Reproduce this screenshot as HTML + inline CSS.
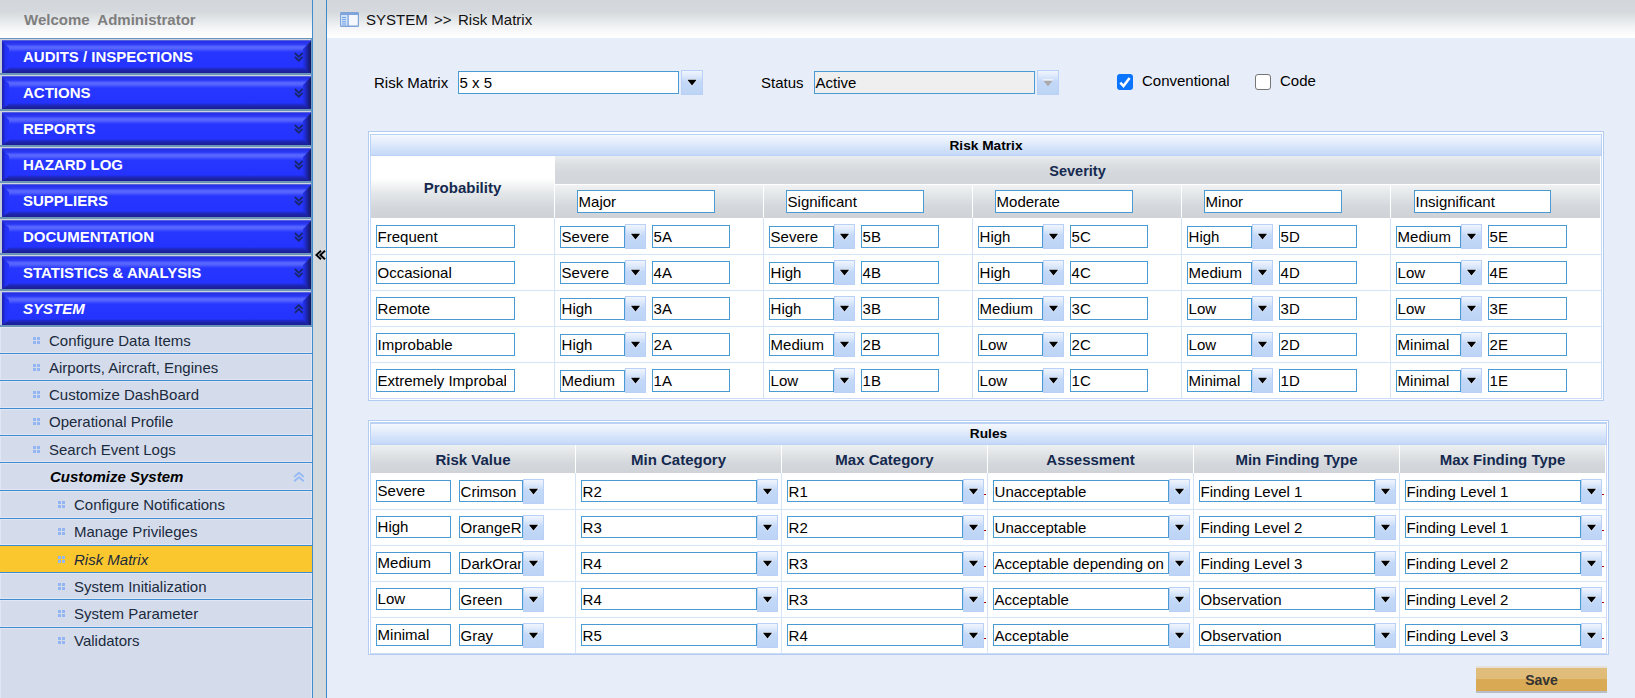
<!DOCTYPE html><html><head><meta charset="utf-8"><title>Risk Matrix</title><style>
*{box-sizing:border-box;margin:0;padding:0}
html,body{width:1635px;height:698px;overflow:hidden}
body{position:relative;background:#e8eef9;font-family:"Liberation Sans",sans-serif;font-size:15px;color:#000}
.abs{position:absolute}
#side{position:absolute;left:0;top:0;width:312px;height:698px;background:#d4dcec}
#sidehead{position:absolute;left:0;top:0;width:312px;height:38px;background:linear-gradient(to bottom,#d3d7db 0,#d5d9dd 30%,#e6e9eb 55%,#f5f6f7 76%,#fcfcfd 90%,#fefefe 100%)}
#sidehead span{position:absolute;left:24px;top:11px;font-weight:bold;color:#7e7e7e;white-space:pre;line-height:18px}
#sideborder{position:absolute;left:312px;top:0;width:1px;height:698px;background:#408dcd}
#split{position:absolute;left:313px;top:0;width:13px;height:698px;background:#d4d9dd}
#splitline{position:absolute;left:326px;top:0;width:1px;height:698px;background:#3b89c9}
#menubg{position:absolute;left:0;top:38px;width:312px;height:289px;background:#c3cbdc}
.mline{position:absolute;left:0;width:312px;height:2px;background:#6a94b8}
.mlight{position:absolute;left:0;width:312px;height:2px;background:#cdd3e1}
.mbtn{position:absolute;left:2px;width:309px;height:33px;
 background:linear-gradient(to bottom,#8189e2 0,#2631e0 1px,#2834ee 3px,#3442fa 5px,#5261ff 6px,#5967ff 8px,#4250ff 10px,#2737ff 12px,#2433ff 27px,#212cd8 28px,#1d25b0 30px,#1a1f92 33px);
 color:#fff;font-weight:bold;line-height:33px;padding-left:21px;white-space:pre}
.mbtn:before{content:"";position:absolute;left:0;top:1px;width:7px;height:32px;clip-path:polygon(0 0,100% 7px,100% 27px,0 100%);background:linear-gradient(to right,#1a21b0 0,#1e28cc 2px,#2331f4 3.5px,#2534ff 100%)}
.mbtn:after{content:"";position:absolute;right:0;top:1px;width:8px;height:32px;clip-path:polygon(100% 0,100% 100%,0 27px,0 8px);background:linear-gradient(to right,#2330f0 0,#1f29cc 30%,#181f86 70%,#131762 100%)}
.mbtn svg{position:absolute;left:291.6px;top:12px}
.item{position:absolute;left:0;width:312px;border-bottom:1px solid #3e8dd0;box-shadow:inset 0 0 0 1px rgba(255,255,255,.3);color:#1b2a3c;white-space:pre}
.item span{position:absolute;line-height:18px}
.dots{position:absolute;width:7px;height:7px}
.dots i{position:absolute;width:3px;height:3px;background:#93b6f3}
#chead{position:absolute;left:327px;top:0;width:1308px;height:38px;background:linear-gradient(to bottom,#d3d7db 0,#d5d9dd 30%,#e6e9eb 55%,#f5f6f7 76%,#fcfcfd 90%,#fefefe 100%)}
.lbl{position:absolute;line-height:18px;white-space:pre}
.inp{position:absolute;height:23px;border:1px solid #4a9ad4;background:#fff;line-height:21px;padding-left:0.6px;white-space:pre;overflow:hidden}
.inp:after{content:"";position:absolute;right:0;top:0;bottom:0;width:1px;background:inherit}
.inp.c8:after{width:8.5px}
.dd{position:absolute;width:22px;height:25px;background:linear-gradient(to bottom,#f0f5fe 0,#dde9fb 22%,#c4d9f8 45%,#bdd4f6 100%);border:1px solid #b9d1f6}
.dd:after{content:"";position:absolute;left:50%;margin-left:-6px;top:7px;width:12px;height:10px;background:#000;clip-path:polygon(1.4px 1.8px,10.6px 1.8px,6px 7.5px)}
.dd:before{content:"";position:absolute;left:50%;margin-left:-6px;top:7px;width:12px;height:10px;background:rgba(255,255,255,.6);clip-path:polygon(0.2px 1.1px,11.8px 1.1px,6px 8.5px)}
.dd.dis:after{background:#a9a9a9;top:8px}
.box{position:absolute;border:1px solid #b4ccf2;background:#fff}
.tbar{position:absolute;border:1px solid #bcd2f5;background:linear-gradient(to bottom,#f4f8fe 0,#e7effc 30%,#d6e4fa 62%,#c5d9f8 100%);text-align:center;font-weight:bold;font-size:13.7px;line-height:22px;color:#000}
.th{position:absolute;text-align:center;font-weight:bold;color:#15294f;white-space:pre}
.hsep{position:absolute;height:1px;background:#d6e4f7}
.vsep{position:absolute;width:1px;background:#d6e4f7}
</style></head><body>
<div id="side">
<div id="sidehead"><span>Welcome  Administrator</span></div>
<div id="menubg"></div>
<div class="mline" style="top:38px;height:1px"></div><div class="mlight" style="top:39px;height:1px"></div>
<div class="mbtn" style="top:40px">AUDITS / INSPECTIONS<svg width="10" height="10" viewBox="0 0 10 10"><path d="M0.9 1 L4.8 4.8 L8.7 1 M0.9 4.9 L4.8 8.7 L8.7 4.9" fill="none" stroke="#18266c" stroke-width="1.8"/></svg></div>
<div class="mline" style="top:73px"></div>
<div class="mlight" style="top:75px;height:1px"></div>
<div class="mbtn" style="top:76px">ACTIONS<svg width="10" height="10" viewBox="0 0 10 10"><path d="M0.9 1 L4.8 4.8 L8.7 1 M0.9 4.9 L4.8 8.7 L8.7 4.9" fill="none" stroke="#18266c" stroke-width="1.8"/></svg></div>
<div class="mline" style="top:109px"></div>
<div class="mlight" style="top:111px;height:1px"></div>
<div class="mbtn" style="top:112px">REPORTS<svg width="10" height="10" viewBox="0 0 10 10"><path d="M0.9 1 L4.8 4.8 L8.7 1 M0.9 4.9 L4.8 8.7 L8.7 4.9" fill="none" stroke="#18266c" stroke-width="1.8"/></svg></div>
<div class="mline" style="top:145px"></div>
<div class="mlight" style="top:147px;height:1px"></div>
<div class="mbtn" style="top:148px">HAZARD LOG<svg width="10" height="10" viewBox="0 0 10 10"><path d="M0.9 1 L4.8 4.8 L8.7 1 M0.9 4.9 L4.8 8.7 L8.7 4.9" fill="none" stroke="#18266c" stroke-width="1.8"/></svg></div>
<div class="mline" style="top:181px"></div>
<div class="mlight" style="top:183px;height:1px"></div>
<div class="mbtn" style="top:184px">SUPPLIERS<svg width="10" height="10" viewBox="0 0 10 10"><path d="M0.9 1 L4.8 4.8 L8.7 1 M0.9 4.9 L4.8 8.7 L8.7 4.9" fill="none" stroke="#18266c" stroke-width="1.8"/></svg></div>
<div class="mline" style="top:217px"></div>
<div class="mlight" style="top:219px;height:1px"></div>
<div class="mbtn" style="top:220px">DOCUMENTATION<svg width="10" height="10" viewBox="0 0 10 10"><path d="M0.9 1 L4.8 4.8 L8.7 1 M0.9 4.9 L4.8 8.7 L8.7 4.9" fill="none" stroke="#18266c" stroke-width="1.8"/></svg></div>
<div class="mline" style="top:253px"></div>
<div class="mlight" style="top:255px;height:1px"></div>
<div class="mbtn" style="top:256px">STATISTICS &amp; ANALYSIS<svg width="10" height="10" viewBox="0 0 10 10"><path d="M0.9 1 L4.8 4.8 L8.7 1 M0.9 4.9 L4.8 8.7 L8.7 4.9" fill="none" stroke="#18266c" stroke-width="1.8"/></svg></div>
<div class="mline" style="top:289px"></div>
<div class="mlight" style="top:291px;height:1px"></div>
<div class="mbtn" style="top:292px;font-style:italic">SYSTEM<svg width="10" height="10" viewBox="0 0 10 10"><path d="M0.9 4.9 L4.8 1.1 L8.7 4.9 M0.9 8.8 L4.8 5 L8.7 8.8" fill="none" stroke="#18266c" stroke-width="1.8"/></svg></div>
<div class="mline" style="top:325px"></div>
<div class="item" style="top:327px;height:27px"><div class="dots" style="left:33px;top:10px"><i style="left:0;top:0"></i><i style="left:4px;top:0"></i><i style="left:0;top:4px"></i><i style="left:4px;top:4px"></i></div><span style="left:49px;top:5px">Configure Data Items</span></div>
<div class="item" style="top:354px;height:27px"><div class="dots" style="left:33px;top:10px"><i style="left:0;top:0"></i><i style="left:4px;top:0"></i><i style="left:0;top:4px"></i><i style="left:4px;top:4px"></i></div><span style="left:49px;top:5px">Airports, Aircraft, Engines</span></div>
<div class="item" style="top:381px;height:28px"><div class="dots" style="left:33px;top:10px"><i style="left:0;top:0"></i><i style="left:4px;top:0"></i><i style="left:0;top:4px"></i><i style="left:4px;top:4px"></i></div><span style="left:49px;top:5px">Customize DashBoard</span></div>
<div class="item" style="top:409px;height:27px"><div class="dots" style="left:33px;top:9px"><i style="left:0;top:0"></i><i style="left:4px;top:0"></i><i style="left:0;top:4px"></i><i style="left:4px;top:4px"></i></div><span style="left:49px;top:4px">Operational Profile</span></div>
<div class="item" style="top:436px;height:27px"><div class="dots" style="left:33px;top:10px"><i style="left:0;top:0"></i><i style="left:4px;top:0"></i><i style="left:0;top:4px"></i><i style="left:4px;top:4px"></i></div><span style="left:49px;top:5px">Search Event Logs</span></div>
<div class="item" style="top:463px;height:28px"><span style="left:50px;top:5px;font-style:italic;font-weight:bold;color:#000">Customize System</span><svg class="abs" style="left:293px;top:8px" width="12" height="12" viewBox="0 0 12 12"><path d="M1.2 5.9 L6 1.7 L10.8 5.9 M1.2 10.3 L6 6.1 L10.8 10.3" fill="none" stroke="#94b9f5" stroke-width="1.8"/></svg></div>
<div class="item" style="top:491px;height:28px"><div class="dots" style="left:58px;top:10px"><i style="left:0;top:0"></i><i style="left:4px;top:0"></i><i style="left:0;top:4px"></i><i style="left:4px;top:4px"></i></div><span style="left:74px;top:5px">Configure Notifications</span></div>
<div class="item" style="top:519px;height:27px"><div class="dots" style="left:58px;top:9px"><i style="left:0;top:0"></i><i style="left:4px;top:0"></i><i style="left:0;top:4px"></i><i style="left:4px;top:4px"></i></div><span style="left:74px;top:4px">Manage Privileges</span></div>
<div class="item" style="top:546px;height:27px;background:#fbc72e;box-shadow:none"><div class="dots" style="left:58px;top:10px"><i style="left:0;top:0"></i><i style="left:4px;top:0"></i><i style="left:0;top:4px"></i><i style="left:4px;top:4px"></i></div><span style="left:74px;top:5px;font-style:italic">Risk Matrix</span></div>
<div class="item" style="top:573px;height:27px"><div class="dots" style="left:58px;top:10px"><i style="left:0;top:0"></i><i style="left:4px;top:0"></i><i style="left:0;top:4px"></i><i style="left:4px;top:4px"></i></div><span style="left:74px;top:5px">System Initialization</span></div>
<div class="item" style="top:600px;height:28px"><div class="dots" style="left:58px;top:10px"><i style="left:0;top:0"></i><i style="left:4px;top:0"></i><i style="left:0;top:4px"></i><i style="left:4px;top:4px"></i></div><span style="left:74px;top:5px">System Parameter</span></div>
<div class="item" style="top:628px;height:75px;border-bottom:none"><div class="dots" style="left:58px;top:9px"><i style="left:0;top:0"></i><i style="left:4px;top:0"></i><i style="left:0;top:4px"></i><i style="left:4px;top:4px"></i></div><span style="left:74px;top:4px">Validators</span></div>
</div>
<div class="abs" style="left:311px;top:38px;width:1px;height:289px;background:#6f99c2"></div><div id="sideborder"></div><div id="split"></div><div id="splitline"></div>
<svg class="abs" style="left:314.6px;top:250px" width="11" height="10" viewBox="0 0 11 10"><path d="M6 0.7 L1.3 5 L6 9.3 M10 0.7 L5.3 5 L10 9.3" fill="none" stroke="#000" stroke-width="1.9"/></svg>
<div id="chead"></div>
<svg class="abs" style="left:340px;top:12px" width="19" height="15" viewBox="0 0 19 15"><rect x="0" y="0" width="19" height="15" rx="1.2" fill="#7fa4dc"/><rect x="1" y="3" width="6.5" height="10.5" fill="#cfe0f7"/><rect x="8.8" y="3" width="9" height="10.5" fill="#f4f8fe"/><path d="M2 5.5h4M2 7.7h4M2 9.9h4M2 12h4" stroke="#5f9be8" stroke-width="0.9"/></svg>
<span class="lbl" style="left:366px;top:11px;color:#111">SYSTEM</span><span class="lbl" style="left:434px;top:11px;color:#111">&gt;&gt;</span><span class="lbl" style="left:458px;top:11px;color:#111">Risk Matrix</span>
<span class="lbl" style="left:374px;top:74px">Risk Matrix</span>
<div class="inp" style="left:458px;top:71px;width:221px">5 x 5</div><div class="dd" style="left:681px;top:70px"></div>
<span class="lbl" style="left:761px;top:74px">Status</span>
<div class="inp" style="left:814px;top:71px;width:221px;background:#efefef">Active</div><div class="dd dis" style="left:1037px;top:70px"></div>
<div class="abs" style="left:1117px;top:74px;width:16px;height:16px;border-radius:3px;background:#0b75ff"><svg width="16" height="16" viewBox="0 0 16 16"><path d="M3.3 8.7 L6.5 12 L12.6 3.9" fill="none" stroke="#fff" stroke-width="2.5"/></svg></div>
<span class="lbl" style="left:1142px;top:72px">Conventional</span>
<div class="abs" style="left:1255px;top:74px;width:16px;height:16px;border-radius:3px;background:#fff;border:1px solid #767676"></div>
<span class="lbl" style="left:1280px;top:72px">Code</span>
<div class="box" style="left:368px;top:131px;width:1236px;height:270px"></div>
<div class="box" style="left:370px;top:156px;width:1232px;height:243px;border-color:#c9dbf6;border-top:none"></div>
<div class="tbar" style="left:370px;top:134px;width:1232px;height:22px">Risk Matrix</div>
<div class="th" style="left:371px;top:156px;width:183px;height:62px;line-height:64px;background:linear-gradient(to bottom,#fff 0,#fff 36%,#e4e7e9 60%,#d2d6da 85%,#cfd3d7 100%)">Probability</div>
<div class="th" style="left:555px;top:156px;width:1045px;height:28px;line-height:30px;font-size:14.5px;background:linear-gradient(to bottom,#eaedef 0,#dcdfe2 30%,#d4d8dc 60%,#d3d7db 100%)">Severity</div>
<div class="th" style="left:555px;top:185px;width:208px;height:33px;background:linear-gradient(to bottom,#f0f2f3 0,#e3e6e8 30%,#d4d8dc 65%,#cfd3d7 100%)"></div>
<div class="inp" style="left:577px;top:190px;width:138px;height:23px;line-height:21px">Major</div>
<div class="th" style="left:764px;top:185px;width:208px;height:33px;background:linear-gradient(to bottom,#f0f2f3 0,#e3e6e8 30%,#d4d8dc 65%,#cfd3d7 100%)"></div>
<div class="inp" style="left:786px;top:190px;width:138px;height:23px;line-height:21px">Significant</div>
<div class="th" style="left:973px;top:185px;width:208px;height:33px;background:linear-gradient(to bottom,#f0f2f3 0,#e3e6e8 30%,#d4d8dc 65%,#cfd3d7 100%)"></div>
<div class="inp" style="left:995px;top:190px;width:138px;height:23px;line-height:21px">Moderate</div>
<div class="th" style="left:1182px;top:185px;width:208px;height:33px;background:linear-gradient(to bottom,#f0f2f3 0,#e3e6e8 30%,#d4d8dc 65%,#cfd3d7 100%)"></div>
<div class="inp" style="left:1204px;top:190px;width:138px;height:23px;line-height:21px">Minor</div>
<div class="th" style="left:1391px;top:185px;width:209px;height:33px;background:linear-gradient(to bottom,#f0f2f3 0,#e3e6e8 30%,#d4d8dc 65%,#cfd3d7 100%)"></div>
<div class="inp" style="left:1414px;top:190px;width:137px;height:23px;line-height:21px">Insignificant</div>
<div class="inp" style="left:376px;top:225px;width:139px;height:23px;line-height:21px">Frequent</div>
<div class="inp" style="left:560px;top:226px;width:65px;height:22px;line-height:20px">Severe</div><div class="dd" style="left:625px;top:224px;width:21px"></div>
<div class="inp" style="left:652px;top:225px;width:78px;height:23px;line-height:21px">5A</div>
<div class="inp" style="left:769px;top:226px;width:65px;height:22px;line-height:20px">Severe</div><div class="dd" style="left:834px;top:224px;width:21px"></div>
<div class="inp" style="left:861px;top:225px;width:78px;height:23px;line-height:21px">5B</div>
<div class="inp" style="left:978px;top:226px;width:65px;height:22px;line-height:20px">High</div><div class="dd" style="left:1043px;top:224px;width:21px"></div>
<div class="inp" style="left:1070px;top:225px;width:78px;height:23px;line-height:21px">5C</div>
<div class="inp" style="left:1187px;top:226px;width:65px;height:22px;line-height:20px">High</div><div class="dd" style="left:1252px;top:224px;width:21px"></div>
<div class="inp" style="left:1279px;top:225px;width:78px;height:23px;line-height:21px">5D</div>
<div class="inp" style="left:1396px;top:226px;width:65px;height:22px;line-height:20px">Medium</div><div class="dd" style="left:1461px;top:224px;width:21px"></div>
<div class="inp" style="left:1488px;top:225px;width:79px;height:23px;line-height:21px">5E</div>
<div class="hsep" style="left:371px;top:254px;width:1230px"></div>
<div class="inp" style="left:376px;top:261px;width:139px;height:23px;line-height:21px">Occasional</div>
<div class="inp" style="left:560px;top:262px;width:65px;height:22px;line-height:20px">Severe</div><div class="dd" style="left:625px;top:260px;width:21px"></div>
<div class="inp" style="left:652px;top:261px;width:78px;height:23px;line-height:21px">4A</div>
<div class="inp" style="left:769px;top:262px;width:65px;height:22px;line-height:20px">High</div><div class="dd" style="left:834px;top:260px;width:21px"></div>
<div class="inp" style="left:861px;top:261px;width:78px;height:23px;line-height:21px">4B</div>
<div class="inp" style="left:978px;top:262px;width:65px;height:22px;line-height:20px">High</div><div class="dd" style="left:1043px;top:260px;width:21px"></div>
<div class="inp" style="left:1070px;top:261px;width:78px;height:23px;line-height:21px">4C</div>
<div class="inp" style="left:1187px;top:262px;width:65px;height:22px;line-height:20px">Medium</div><div class="dd" style="left:1252px;top:260px;width:21px"></div>
<div class="inp" style="left:1279px;top:261px;width:78px;height:23px;line-height:21px">4D</div>
<div class="inp" style="left:1396px;top:262px;width:65px;height:22px;line-height:20px">Low</div><div class="dd" style="left:1461px;top:260px;width:21px"></div>
<div class="inp" style="left:1488px;top:261px;width:79px;height:23px;line-height:21px">4E</div>
<div class="hsep" style="left:371px;top:290px;width:1230px"></div>
<div class="inp" style="left:376px;top:297px;width:139px;height:23px;line-height:21px">Remote</div>
<div class="inp" style="left:560px;top:298px;width:65px;height:22px;line-height:20px">High</div><div class="dd" style="left:625px;top:296px;width:21px"></div>
<div class="inp" style="left:652px;top:297px;width:78px;height:23px;line-height:21px">3A</div>
<div class="inp" style="left:769px;top:298px;width:65px;height:22px;line-height:20px">High</div><div class="dd" style="left:834px;top:296px;width:21px"></div>
<div class="inp" style="left:861px;top:297px;width:78px;height:23px;line-height:21px">3B</div>
<div class="inp" style="left:978px;top:298px;width:65px;height:22px;line-height:20px">Medium</div><div class="dd" style="left:1043px;top:296px;width:21px"></div>
<div class="inp" style="left:1070px;top:297px;width:78px;height:23px;line-height:21px">3C</div>
<div class="inp" style="left:1187px;top:298px;width:65px;height:22px;line-height:20px">Low</div><div class="dd" style="left:1252px;top:296px;width:21px"></div>
<div class="inp" style="left:1279px;top:297px;width:78px;height:23px;line-height:21px">3D</div>
<div class="inp" style="left:1396px;top:298px;width:65px;height:22px;line-height:20px">Low</div><div class="dd" style="left:1461px;top:296px;width:21px"></div>
<div class="inp" style="left:1488px;top:297px;width:79px;height:23px;line-height:21px">3E</div>
<div class="hsep" style="left:371px;top:326px;width:1230px"></div>
<div class="inp" style="left:376px;top:333px;width:139px;height:23px;line-height:21px">Improbable</div>
<div class="inp" style="left:560px;top:334px;width:65px;height:22px;line-height:20px">High</div><div class="dd" style="left:625px;top:332px;width:21px"></div>
<div class="inp" style="left:652px;top:333px;width:78px;height:23px;line-height:21px">2A</div>
<div class="inp" style="left:769px;top:334px;width:65px;height:22px;line-height:20px">Medium</div><div class="dd" style="left:834px;top:332px;width:21px"></div>
<div class="inp" style="left:861px;top:333px;width:78px;height:23px;line-height:21px">2B</div>
<div class="inp" style="left:978px;top:334px;width:65px;height:22px;line-height:20px">Low</div><div class="dd" style="left:1043px;top:332px;width:21px"></div>
<div class="inp" style="left:1070px;top:333px;width:78px;height:23px;line-height:21px">2C</div>
<div class="inp" style="left:1187px;top:334px;width:65px;height:22px;line-height:20px">Low</div><div class="dd" style="left:1252px;top:332px;width:21px"></div>
<div class="inp" style="left:1279px;top:333px;width:78px;height:23px;line-height:21px">2D</div>
<div class="inp" style="left:1396px;top:334px;width:65px;height:22px;line-height:20px">Minimal</div><div class="dd" style="left:1461px;top:332px;width:21px"></div>
<div class="inp" style="left:1488px;top:333px;width:79px;height:23px;line-height:21px">2E</div>
<div class="hsep" style="left:371px;top:362px;width:1230px"></div>
<div class="inp c8" style="left:376px;top:369px;width:139px;height:23px;line-height:21px">Extremely Improbable</div>
<div class="inp" style="left:560px;top:370px;width:65px;height:22px;line-height:20px">Medium</div><div class="dd" style="left:625px;top:368px;width:21px"></div>
<div class="inp" style="left:652px;top:369px;width:78px;height:23px;line-height:21px">1A</div>
<div class="inp" style="left:769px;top:370px;width:65px;height:22px;line-height:20px">Low</div><div class="dd" style="left:834px;top:368px;width:21px"></div>
<div class="inp" style="left:861px;top:369px;width:78px;height:23px;line-height:21px">1B</div>
<div class="inp" style="left:978px;top:370px;width:65px;height:22px;line-height:20px">Low</div><div class="dd" style="left:1043px;top:368px;width:21px"></div>
<div class="inp" style="left:1070px;top:369px;width:78px;height:23px;line-height:21px">1C</div>
<div class="inp" style="left:1187px;top:370px;width:65px;height:22px;line-height:20px">Minimal</div><div class="dd" style="left:1252px;top:368px;width:21px"></div>
<div class="inp" style="left:1279px;top:369px;width:78px;height:23px;line-height:21px">1D</div>
<div class="inp" style="left:1396px;top:370px;width:65px;height:22px;line-height:20px">Minimal</div><div class="dd" style="left:1461px;top:368px;width:21px"></div>
<div class="inp" style="left:1488px;top:369px;width:79px;height:23px;line-height:21px">1E</div>
<div class="vsep" style="left:554px;top:218px;height:180px"></div>
<div class="vsep" style="left:763px;top:218px;height:180px"></div>
<div class="vsep" style="left:972px;top:218px;height:180px"></div>
<div class="vsep" style="left:1181px;top:218px;height:180px"></div>
<div class="vsep" style="left:1390px;top:218px;height:180px"></div>
<div class="box" style="left:368px;top:420px;width:1241px;height:235px"></div>
<div class="box" style="left:370px;top:445px;width:1237px;height:209px;border-color:#c9dbf6;border-top:none"></div>
<div class="tbar" style="left:370px;top:422px;width:1237px;height:23px;line-height:20px;border-top-width:2px">Rules</div>
<div class="th" style="left:371px;top:445px;width:204px;height:28px;line-height:30px;background:linear-gradient(to bottom,#eef0f2 0,#e2e5e7 30%,#d4d8dc 65%,#cfd3d7 100%)">Risk Value</div>
<div class="th" style="left:576px;top:445px;width:205px;height:28px;line-height:30px;background:linear-gradient(to bottom,#eef0f2 0,#e2e5e7 30%,#d4d8dc 65%,#cfd3d7 100%)">Min Category</div>
<div class="th" style="left:782px;top:445px;width:205px;height:28px;line-height:30px;background:linear-gradient(to bottom,#eef0f2 0,#e2e5e7 30%,#d4d8dc 65%,#cfd3d7 100%)">Max Category</div>
<div class="th" style="left:988px;top:445px;width:205px;height:28px;line-height:30px;background:linear-gradient(to bottom,#eef0f2 0,#e2e5e7 30%,#d4d8dc 65%,#cfd3d7 100%)">Assessment</div>
<div class="th" style="left:1194px;top:445px;width:205px;height:28px;line-height:30px;background:linear-gradient(to bottom,#eef0f2 0,#e2e5e7 30%,#d4d8dc 65%,#cfd3d7 100%)">Min Finding Type</div>
<div class="th" style="left:1400px;top:445px;width:205px;height:28px;line-height:30px;background:linear-gradient(to bottom,#eef0f2 0,#e2e5e7 30%,#d4d8dc 65%,#cfd3d7 100%)">Max Finding Type</div>
<div class="inp" style="left:376px;top:480px;width:75px;height:22px;line-height:20px">Severe</div>
<div class="inp" style="left:459px;top:480px;width:64px;height:22px;line-height:22px">Crimson</div><div class="dd" style="left:523px;top:479px;width:21px"></div>
<div class="inp" style="left:581px;top:480px;width:176px;height:22px;line-height:22px">R2</div><div class="dd" style="left:757px;top:479px;width:21px"></div>
<div class="inp" style="left:787px;top:480px;width:176px;height:22px;line-height:22px">R1</div><div class="dd" style="left:963px;top:479px;width:21px"></div>
<div class="inp" style="left:993px;top:480px;width:176px;height:22px;line-height:22px">Unacceptable</div><div class="dd" style="left:1169px;top:479px;width:21px"></div>
<div class="inp" style="left:1199px;top:480px;width:176px;height:22px;line-height:22px">Finding Level 1</div><div class="dd" style="left:1375px;top:479px;width:21px"></div>
<div class="inp" style="left:1405px;top:480px;width:176px;height:22px;line-height:22px">Finding Level 1</div><div class="dd" style="left:1581px;top:479px;width:21px"></div>
<span class="abs" style="left:1602.2px;top:493.6px;width:1.6px;height:1.4px;background:#a80000"></span><span class="abs" style="left:984.2px;top:493.6px;width:1.6px;height:1.4px;background:#a80000"></span>
<div class="hsep" style="left:371px;top:509px;width:1235px"></div>
<div class="inp" style="left:376px;top:516px;width:75px;height:22px;line-height:20px">High</div>
<div class="inp" style="left:459px;top:516px;width:64px;height:22px;line-height:22px">OrangeRed</div><div class="dd" style="left:523px;top:515px;width:21px"></div>
<div class="inp" style="left:581px;top:516px;width:176px;height:22px;line-height:22px">R3</div><div class="dd" style="left:757px;top:515px;width:21px"></div>
<div class="inp" style="left:787px;top:516px;width:176px;height:22px;line-height:22px">R2</div><div class="dd" style="left:963px;top:515px;width:21px"></div>
<div class="inp" style="left:993px;top:516px;width:176px;height:22px;line-height:22px">Unacceptable</div><div class="dd" style="left:1169px;top:515px;width:21px"></div>
<div class="inp" style="left:1199px;top:516px;width:176px;height:22px;line-height:22px">Finding Level 2</div><div class="dd" style="left:1375px;top:515px;width:21px"></div>
<div class="inp" style="left:1405px;top:516px;width:176px;height:22px;line-height:22px">Finding Level 1</div><div class="dd" style="left:1581px;top:515px;width:21px"></div>
<span class="abs" style="left:1602.2px;top:529.6px;width:1.6px;height:1.4px;background:#a80000"></span><span class="abs" style="left:984.2px;top:529.6px;width:1.6px;height:1.4px;background:#a80000"></span>
<div class="hsep" style="left:371px;top:545px;width:1235px"></div>
<div class="inp" style="left:376px;top:552px;width:75px;height:22px;line-height:20px">Medium</div>
<div class="inp" style="left:459px;top:552px;width:64px;height:22px;line-height:22px">DarkOrange</div><div class="dd" style="left:523px;top:551px;width:21px"></div>
<div class="inp" style="left:581px;top:552px;width:176px;height:22px;line-height:22px">R4</div><div class="dd" style="left:757px;top:551px;width:21px"></div>
<div class="inp" style="left:787px;top:552px;width:176px;height:22px;line-height:22px">R3</div><div class="dd" style="left:963px;top:551px;width:21px"></div>
<div class="inp" style="left:993px;top:552px;width:176px;height:22px;line-height:22px">Acceptable depending on risk</div><div class="dd" style="left:1169px;top:551px;width:21px"></div>
<div class="inp" style="left:1199px;top:552px;width:176px;height:22px;line-height:22px">Finding Level 3</div><div class="dd" style="left:1375px;top:551px;width:21px"></div>
<div class="inp" style="left:1405px;top:552px;width:176px;height:22px;line-height:22px">Finding Level 2</div><div class="dd" style="left:1581px;top:551px;width:21px"></div>
<span class="abs" style="left:1602.2px;top:565.6px;width:1.6px;height:1.4px;background:#a80000"></span><span class="abs" style="left:984.2px;top:565.6px;width:1.6px;height:1.4px;background:#a80000"></span>
<div class="hsep" style="left:371px;top:581px;width:1235px"></div>
<div class="inp" style="left:376px;top:588px;width:75px;height:22px;line-height:20px">Low</div>
<div class="inp" style="left:459px;top:588px;width:64px;height:22px;line-height:22px">Green</div><div class="dd" style="left:523px;top:587px;width:21px"></div>
<div class="inp" style="left:581px;top:588px;width:176px;height:22px;line-height:22px">R4</div><div class="dd" style="left:757px;top:587px;width:21px"></div>
<div class="inp" style="left:787px;top:588px;width:176px;height:22px;line-height:22px">R3</div><div class="dd" style="left:963px;top:587px;width:21px"></div>
<div class="inp" style="left:993px;top:588px;width:176px;height:22px;line-height:22px">Acceptable</div><div class="dd" style="left:1169px;top:587px;width:21px"></div>
<div class="inp" style="left:1199px;top:588px;width:176px;height:22px;line-height:22px">Observation</div><div class="dd" style="left:1375px;top:587px;width:21px"></div>
<div class="inp" style="left:1405px;top:588px;width:176px;height:22px;line-height:22px">Finding Level 2</div><div class="dd" style="left:1581px;top:587px;width:21px"></div>
<span class="abs" style="left:1602.2px;top:601.6px;width:1.6px;height:1.4px;background:#a80000"></span><span class="abs" style="left:984.2px;top:601.6px;width:1.6px;height:1.4px;background:#a80000"></span>
<div class="hsep" style="left:371px;top:617px;width:1235px"></div>
<div class="inp" style="left:376px;top:624px;width:75px;height:22px;line-height:20px">Minimal</div>
<div class="inp" style="left:459px;top:624px;width:64px;height:22px;line-height:22px">Gray</div><div class="dd" style="left:523px;top:623px;width:21px"></div>
<div class="inp" style="left:581px;top:624px;width:176px;height:22px;line-height:22px">R5</div><div class="dd" style="left:757px;top:623px;width:21px"></div>
<div class="inp" style="left:787px;top:624px;width:176px;height:22px;line-height:22px">R4</div><div class="dd" style="left:963px;top:623px;width:21px"></div>
<div class="inp" style="left:993px;top:624px;width:176px;height:22px;line-height:22px">Acceptable</div><div class="dd" style="left:1169px;top:623px;width:21px"></div>
<div class="inp" style="left:1199px;top:624px;width:176px;height:22px;line-height:22px">Observation</div><div class="dd" style="left:1375px;top:623px;width:21px"></div>
<div class="inp" style="left:1405px;top:624px;width:176px;height:22px;line-height:22px">Finding Level 3</div><div class="dd" style="left:1581px;top:623px;width:21px"></div>
<span class="abs" style="left:1602.2px;top:637.6px;width:1.6px;height:1.4px;background:#a80000"></span><span class="abs" style="left:984.2px;top:637.6px;width:1.6px;height:1.4px;background:#a80000"></span>
<div class="vsep" style="left:575px;top:473px;height:180px"></div>
<div class="vsep" style="left:781px;top:473px;height:180px"></div>
<div class="vsep" style="left:987px;top:473px;height:180px"></div>
<div class="vsep" style="left:1193px;top:473px;height:180px"></div>
<div class="vsep" style="left:1399px;top:473px;height:180px"></div>
<div class="abs" style="left:1476px;top:666px;width:131px;height:27px;background:linear-gradient(to bottom,#e6e1d8 0,#e6e1d8 2px,#e1bd7c 2px,#e0bb78 13px,#daab57 13px,#d9a953 25px,#b9bdc6 25px,#b9bdc6 27px);text-align:center;font-weight:bold;font-size:14px;color:#333;line-height:29px">Save</div>
</body></html>
